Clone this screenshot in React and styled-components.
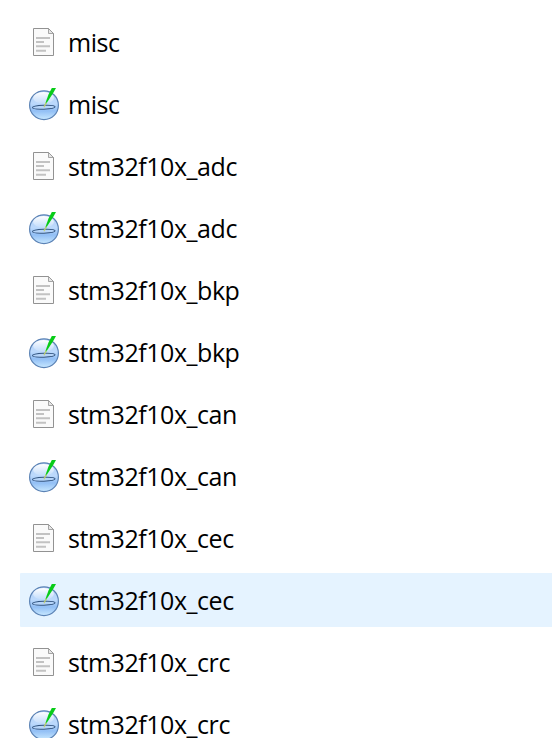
import React from "react";
import styled, { createGlobalStyle } from "styled-components";

const Global = createGlobalStyle`
  body { margin: 0; background: #fff; overflow: hidden; }
`;

const FileList = styled.ul`
  box-sizing: border-box;
  display: flex;
  flex-direction: column;
  gap: 8px;
  height: 738px;
  margin: 0;
  padding: 15px 0 0 20px;
  overflow: hidden;
  list-style: none;
  background: #fff;
`;

const FileRow = styled.li`
  display: flex;
  flex: none;
  align-items: center;
  gap: 8px;
  height: 54px;
  padding-left: 8px;
  border-radius: 1px 0 0 1px;
  background: ${(p) => (p.$selected ? "#e5f3ff" : "transparent")};
`;

const FileIcon = styled.svg`
  display: block;
  flex: none;
  width: 32px;
  height: 36px;
`;

const FileName = styled.span`
  color: #000;
  font-family: "Open Sans", "Noto Sans", sans-serif;
  font-size: 25px;
  line-height: 34px;
  letter-spacing: -0.45px;
  white-space: nowrap;
`;

function DocumentIcon() {
  return (
    <FileIcon viewBox="0 0 32 36" aria-hidden="true">
      <path d="M5.5 4.5H20.5L25.5 9.5V31.5H5.5Z" fill="#fafafa" stroke="#929292" />
      <path d="M20.5 4.5V9.5H25.5Z" fill="#e6e6e6" stroke="#929292" strokeWidth=".8" />
      <path d="M8 14H22M8 18H16M8 22.3H22M8 26.8H18" stroke="#c2c2c2" strokeWidth="2" />
    </FileIcon>
  );
}

function SourceIcon() {
  return (
    <FileIcon viewBox="0 0 32 36" aria-hidden="true">
      <defs>
        <linearGradient id="glass" x1="0" y1="0" x2="0" y2="1">
          <stop offset="0" stopColor="#b4d2f8" />
          <stop offset=".45" stopColor="#bcd9fc" />
          <stop offset=".7" stopColor="#92bff5" />
          <stop offset="1" stopColor="#c8e8ff" />
        </linearGradient>
        <linearGradient id="shine" x1="0" y1="0" x2="0" y2="1">
          <stop offset="0" stopColor="#fff" />
          <stop offset="1" stopColor="#fff" stopOpacity=".1" />
        </linearGradient>
      </defs>
      <circle cx="16" cy="19.2" r="14.4" fill="url(#glass)" stroke="#5c83b5" strokeWidth="1.2" />
      <ellipse cx="15.5" cy="11.8" rx="10.5" ry="5.8" fill="url(#shine)" />
      <ellipse cx="15.8" cy="21.2" rx="11.3" ry="2" transform="rotate(-2 15.8 21.2)" fill="#b6d5fa" stroke="#345681" strokeWidth="1" />
      <path d="M16 21L20.5 8.5L23.8 2H28L25.2 7Z" fill="#08cc18" />
      <path d="M16 21.3L18.3 16.5" stroke="#c7cf78" strokeWidth="1.2" />
    </FileIcon>
  );
}

const names = ["misc", "stm32f10x_adc", "stm32f10x_bkp", "stm32f10x_can", "stm32f10x_cec", "stm32f10x_crc"];
const files = names.flatMap((name) => [
  { name, kind: "document" },
  { name, kind: "source" },
]);

export default function App() {
  return (
    <>
      <Global />
      <FileList>
        {files.map(({ name, kind }, i) => (
          <FileRow key={name + kind} $selected={i === 9}>
            {kind === "document" ? <DocumentIcon /> : <SourceIcon />}
            <FileName>{name}</FileName>
          </FileRow>
        ))}
      </FileList>
    </>
  );
}
